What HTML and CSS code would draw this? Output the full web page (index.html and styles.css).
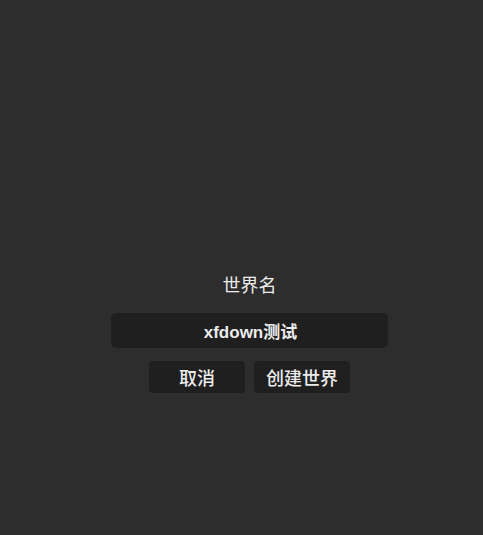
FILE: index.html
```html
<!DOCTYPE html>
<html lang="zh">
<head>
<meta charset="utf-8">
<link rel="stylesheet" href="styles.css">
</head>
<body>
<div class="page">
  <div class="dialog">
    <div class="label">世界名</div>
    <input class="name-input" type="text" value="xfdown测试">
    <div class="actions">
      <button class="btn">取消</button>
      <button class="btn">创建世界</button>
    </div>
  </div>
</div>
</body>
</html>
```
FILE: styles.css
```css
html, body {
  margin: 0;
  padding: 0;
  background: #2d2d2d;
}
.page {
  height: 535px;
  box-sizing: border-box;
  padding-top: 274px;
  padding-left: 16px;
  display: flex;
  flex-direction: column;
  align-items: center;
  font-family: "Liberation Sans", "Noto Sans CJK SC", sans-serif;
  color: #ececec;
}
.dialog {
  display: flex;
  flex-direction: column;
  align-items: center;
}
.label {
  font-size: 18px;
  line-height: 24px;
  height: 24px;
}
.name-input {
  margin-top: 15px;
  width: 277px;
  height: 35px;
  box-sizing: border-box;
  border: none;
  outline: none;
  border-radius: 5px;
  background: #1f1f1f;
  color: #ececec;
  font-family: "Liberation Sans", "Noto Sans CJK SC", sans-serif;
  font-size: 17px;
  font-weight: bold;
  text-align: center;
  padding: 0 0 0 2px;
}
.actions {
  margin-top: 13px;
  display: flex;
  gap: 9px;
}
.btn {
  width: 96px;
  height: 32px;
  border: none;
  border-radius: 4px;
  background: #1f1f1f;
  color: #ececec;
  font-family: "Noto Sans CJK SC", sans-serif;
  font-size: 18px;
  font-weight: 500;
  padding: 0;
  line-height: 32px;
}
```
